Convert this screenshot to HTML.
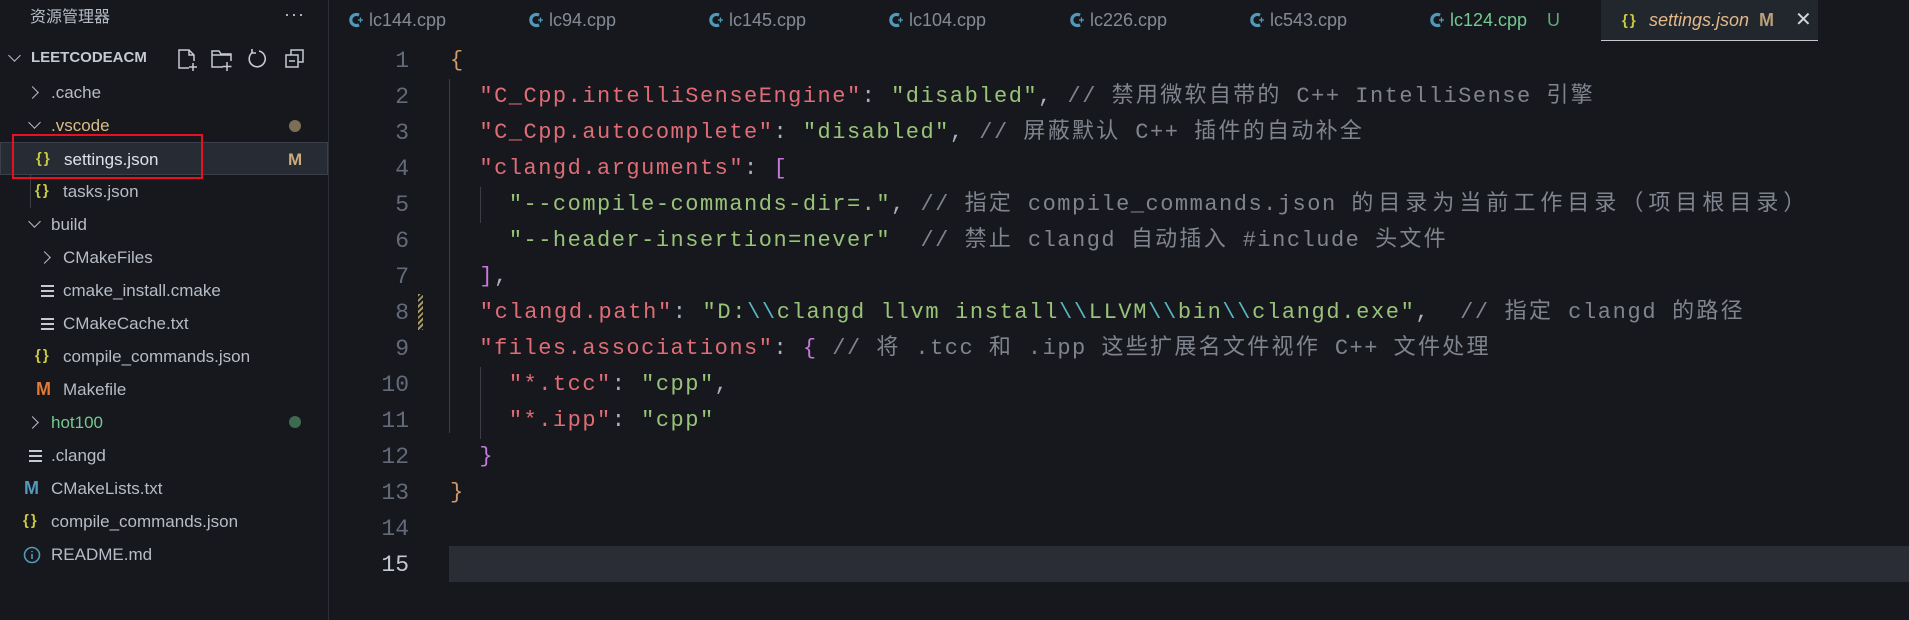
<!DOCTYPE html>
<html><head><meta charset="utf-8"><style>
*{margin:0;padding:0;box-sizing:border-box}
body{width:1909px;height:620px;background:#16181d;overflow:hidden;position:relative;font-family:"Liberation Sans","Noto Sans CJK SC",sans-serif}
.a{position:absolute;white-space:pre}
.side{position:absolute;left:0;top:0;width:329px;height:620px;background:#16181d;border-right:1px solid #2b2f36}
.row{position:absolute;left:0;width:328px;height:33px;line-height:33px;font-size:17px;color:#b7bcc6}
.chev{position:absolute;width:9px;height:9px;border-right:1.5px solid #b7bcc6;border-bottom:1.5px solid #b7bcc6}
.down{transform:rotate(45deg)}
.right{transform:rotate(-45deg)}
.json{position:absolute;color:#cbcb41;font-weight:bold;font-size:15px;letter-spacing:2px}
.lines{position:absolute;width:13px;height:12px;background:linear-gradient(#c5c9d1 0 2px,transparent 2px 5px,#c5c9d1 5px 7px,transparent 7px 10px,#c5c9d1 10px 12px)}
.tab{position:absolute;top:0;height:41px;line-height:41px;font-size:18px;color:#858b96}
.code{position:absolute;left:450px;font-family:"Liberation Mono","Noto Sans CJK SC",monospace;font-size:22px;letter-spacing:1.5px;height:36px;line-height:36px;color:#abb2bf;white-space:pre}
.z{letter-spacing:2.3px}
.ln{position:absolute;left:340px;width:69px;text-align:right;font-family:"Liberation Mono",monospace;font-size:23px;height:36px;line-height:36px;color:#636b7a}
.k{color:#e06c75}.s{color:#98c379}.e{color:#56b6c2}.c{color:#7f848e}.o{color:#d19a66}.p{color:#c678dd}
</style></head><body>
<div class="side">
<div class="a" style="left:30px;top:3px;font-size:16px;color:#b7bcc6">资源管理器</div>
<div class="a" style="left:284px;top:4px;font-size:18px;color:#c5c9d1;letter-spacing:1px">···</div>
<div class="chev down" style="left:10px;top:51px"></div>
<div class="a" style="left:31px;top:49px;font-size:15px;font-weight:bold;color:#c5c9d1">LEETCODEACM</div>
<svg class="a" style="left:176px;top:48px" width="24" height="24" viewBox="0 0 24 24" fill="none" stroke="#c5c9d1" stroke-width="1.5"><path d="M13 20H3V2h10l5 5v6M13 2v5h5M17 15v8M13 19h8"/></svg>
<svg class="a" style="left:210px;top:48px" width="26" height="24" viewBox="0 0 26 24" fill="none" stroke="#c5c9d1" stroke-width="1.5"><path d="M13 19H2V3h7l2 3h10v7M2 7h19M17 14v9M12.5 18.5h9"/></svg>
<svg class="a" style="left:247px;top:48px" width="22" height="22" viewBox="0 0 22 22" fill="none" stroke="#c5c9d1" stroke-width="1.6"><path d="M6 4A8 8 0 1 0 12 3M5 1v4h4"/></svg>
<svg class="a" style="left:284px;top:48px" width="22" height="22" viewBox="0 0 22 22" fill="none" stroke="#c5c9d1" stroke-width="1.5"><rect x="2" y="7" width="12" height="12"/><path d="M7 7V2h12v12h-5M5 13h6"/></svg>
<div class="row" style="top:76px"><div class="chev right" style="left:28px;top:12px"></div><span class="a" style="left:51px">.cache</span></div>
<div class="row" style="top:109px"><div class="chev down" style="left:30px;top:9px"></div><span class="a" style="left:51px;color:#d9bd86">.vscode</span><div class="a" style="left:289px;top:11px;width:12px;height:12px;border-radius:50%;background:#7d6e55"></div></div>
<div style="position:absolute;left:30px;top:142px;width:1px;height:66px;background:#3a3f48"></div>
<div class="row" style="top:142px;background:#272b33;border:1px solid #3a3f4a;color:#dfe2e8"><span class="json" style="left:35px;top:-1px">{}</span><span class="a" style="left:63px">settings.json</span><span class="a" style="left:287px;font-weight:bold;color:#c9ac7a">M</span></div>
<div style="position:absolute;left:12px;top:134px;width:191px;height:45px;border:2.5px solid #e81123"></div>
<div class="row" style="top:175px"><span class="json" style="left:35px;top:-1px">{}</span><span class="a" style="left:63px">tasks.json</span></div>
<div class="row" style="top:208px"><div class="chev down" style="left:30px;top:9px"></div><span class="a" style="left:51px">build</span></div>
<div class="row" style="top:241px"><div class="chev right" style="left:40px;top:12px"></div><span class="a" style="left:63px">CMakeFiles</span></div>
<div class="row" style="top:274px"><div class="lines" style="left:41px;top:11px"></div><span class="a" style="left:63px">cmake_install.cmake</span></div>
<div class="row" style="top:307px"><div class="lines" style="left:41px;top:11px"></div><span class="a" style="left:63px">CMakeCache.txt</span></div>
<div class="row" style="top:340px"><span class="json" style="left:35px;top:-1px">{}</span><span class="a" style="left:63px">compile_commands.json</span></div>
<div class="row" style="top:373px"><span class="a" style="left:36px;font-weight:bold;color:#e37933;font-size:18px">M</span><span class="a" style="left:63px">Makefile</span></div>
<div class="row" style="top:406px"><div class="chev right" style="left:28px;top:12px"></div><span class="a" style="left:51px;color:#73c991">hot100</span><div class="a" style="left:289px;top:10px;width:12px;height:12px;border-radius:50%;background:#3d6b4f"></div></div>
<div class="row" style="top:439px"><div class="lines" style="left:29px;top:11px"></div><span class="a" style="left:51px">.clangd</span></div>
<div class="row" style="top:472px"><span class="a" style="left:24px;font-weight:bold;color:#519aba;font-size:18px">M</span><span class="a" style="left:51px">CMakeLists.txt</span></div>
<div class="row" style="top:505px"><span class="json" style="left:23px;top:-1px">{}</span><span class="a" style="left:51px">compile_commands.json</span></div>
<div class="row" style="top:538px"><svg class="a" style="left:23px;top:8px" width="18" height="18" viewBox="0 0 18 18" fill="none" stroke="#519aba" stroke-width="1.6"><circle cx="9" cy="9" r="7.5"/><path d="M9 8v5M9 5v1.2"/></svg><span class="a" style="left:51px">README.md</span></div>
</div>

<svg width="0" height="0" style="position:absolute"><defs><g id="cp"><path d="M10 3.2A5.5 5.5 0 1 0 10 12.8" fill="none" stroke="#519aba" stroke-width="3.2"/><path d="M9 8h5M11.5 5.5v5" stroke="#519aba" stroke-width="1.3"/></g></defs></svg>
<div class="tab" style="left:349px"><svg class="a" style="left:0;top:12px" width="15" height="16"><use href="#cp"/></svg><span class="a" style="left:20px">lc144.cpp</span></div>
<div class="tab" style="left:529px"><svg class="a" style="left:0;top:12px" width="15" height="16"><use href="#cp"/></svg><span class="a" style="left:20px">lc94.cpp</span></div>
<div class="tab" style="left:709px"><svg class="a" style="left:0;top:12px" width="15" height="16"><use href="#cp"/></svg><span class="a" style="left:20px">lc145.cpp</span></div>
<div class="tab" style="left:889px"><svg class="a" style="left:0;top:12px" width="15" height="16"><use href="#cp"/></svg><span class="a" style="left:20px">lc104.cpp</span></div>
<div class="tab" style="left:1070px"><svg class="a" style="left:0;top:12px" width="15" height="16"><use href="#cp"/></svg><span class="a" style="left:20px">lc226.cpp</span></div>
<div class="tab" style="left:1250px"><svg class="a" style="left:0;top:12px" width="15" height="16"><use href="#cp"/></svg><span class="a" style="left:20px">lc543.cpp</span></div>
<div class="tab" style="left:1430px;color:#73c991"><svg class="a" style="left:0;top:12px" width="15" height="16"><use href="#cp"/></svg><span class="a" style="left:20px">lc124.cpp</span><span class="a" style="left:117px;color:#5fa87a">U</span></div>
<div class="tab" style="left:1601px;width:217px;background:#22262d;border-bottom:1px solid #c8c8c8;color:#e2b98a"><span class="json" style="left:21px;top:0">{}</span><span class="a" style="left:48px;font-style:italic">settings.json</span><span class="a" style="left:158px;font-weight:bold;color:#b9a07a">M</span><span class="a" style="left:194px;color:#d0d4da;font-size:20px">✕</span></div>

<div style="position:absolute;left:449px;top:546px;width:1460px;height:36px;background:#2a2d36"></div>
<div style="position:absolute;left:449px;top:79px;width:1px;height:354px;background:#3a3e47"></div>
<div style="position:absolute;left:480px;top:187px;width:1px;height:36px;background:#3a3e47"></div>
<div style="position:absolute;left:480px;top:367px;width:1px;height:72px;background:#3a3e47"></div>
<div style="position:absolute;left:418px;top:294px;width:5px;height:36px;background:repeating-linear-gradient(135deg,#a89a68 0 2px,#16181d 2px 4px)"></div>

<div class="ln" style="top:43px">1</div><div class="ln" style="top:79px">2</div><div class="ln" style="top:115px">3</div><div class="ln" style="top:151px">4</div><div class="ln" style="top:187px">5</div><div class="ln" style="top:223px">6</div><div class="ln" style="top:259px">7</div><div class="ln" style="top:295px">8</div><div class="ln" style="top:331px">9</div><div class="ln" style="top:367px">10</div><div class="ln" style="top:403px">11</div><div class="ln" style="top:439px">12</div><div class="ln" style="top:475px">13</div><div class="ln" style="top:511px">14</div><div class="ln" style="top:547px;color:#c5c9d1">15</div>

<div class="code" style="top:43px"><span class="o">{</span></div>
<div class="code" style="top:79px">  <span class="k">"C_Cpp.intelliSenseEngine"</span>: <span class="s">"disabled"</span>, <span class="c">// <span class="z">禁用微软自带的</span> C++ IntelliSense <span class="z">引擎</span></span></div>
<div class="code" style="top:115px">  <span class="k">"C_Cpp.autocomplete"</span>: <span class="s">"disabled"</span>, <span class="c">// <span class="z">屏蔽默认</span> C++ <span class="z">插件的自动补全</span></span></div>
<div class="code" style="top:151px">  <span class="k">"clangd.arguments"</span>: <span class="p">[</span></div>
<div class="code" style="top:187px">    <span class="s">"--compile-commands-dir=."</span>, <span class="c">// <span class="z">指定</span> compile_commands.json <span style="letter-spacing:5px">的目录为当前工作目录（项目根目录）</span></span></div>
<div class="code" style="top:223px">    <span class="s">"--header-insertion=never"</span>  <span class="c">// <span class="z">禁止</span> clangd <span class="z">自动插入</span> #include <span class="z">头文件</span></span></div>
<div class="code" style="top:259px">  <span class="p">]</span>,</div>
<div class="code" style="top:295px;letter-spacing:1.65px">  <span class="k">"clangd.path"</span>: <span class="s">"D:<span class="e">\\</span>clangd llvm install<span class="e">\\</span>LLVM<span class="e">\\</span>bin<span class="e">\\</span>clangd.exe"</span>,  <span class="c">// <span class="z">指定</span> clangd <span class="z">的路径</span></span></div>
<div class="code" style="top:331px">  <span class="k">"files.associations"</span>: <span class="p">{</span> <span class="c">// <span class="z">将</span> .tcc <span class="z">和</span> .ipp <span class="z">这些扩展名文件视作</span> C++ <span class="z">文件处理</span></span></div>
<div class="code" style="top:367px">    <span class="k">"*.tcc"</span>: <span class="s">"cpp"</span>,</div>
<div class="code" style="top:403px">    <span class="k">"*.ipp"</span>: <span class="s">"cpp"</span></div>
<div class="code" style="top:439px">  <span class="p">}</span></div>
<div class="code" style="top:475px"><span class="o">}</span></div>
</body></html>
